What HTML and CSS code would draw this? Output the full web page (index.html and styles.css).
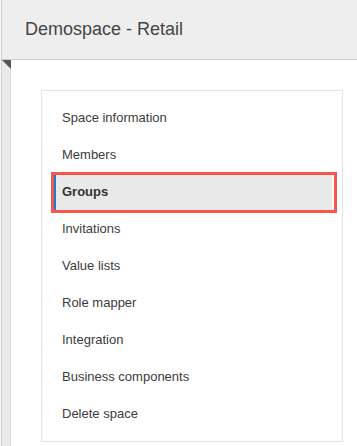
FILE: index.html
```html
<!DOCTYPE html>
<html>
<head>
<meta charset="utf-8">
<link rel="stylesheet" href="styles.css">
</head>
<body>
<div class="frame">
  <header class="top">Demospace - Retail</header>
  <div class="body">
    <div class="rail"></div>
    <main class="main">
      <span class="corner"></span>
      <nav class="card">
        <div class="item">Space information</div>
        <div class="item">Members</div>
        <div class="item selected">Groups</div>
        <div class="item">Invitations</div>
        <div class="item">Value lists</div>
        <div class="item">Role mapper</div>
        <div class="item">Integration</div>
        <div class="item">Business components</div>
        <div class="item">Delete space</div>
      </nav>
    </main>
  </div>
</div>
</body>
</html>
```
FILE: styles.css
```css
html, body {
  margin: 0;
  padding: 0;
  height: 100%;
}
body {
  background: #f6f6f6;
  font-family: "Liberation Sans", Arial, sans-serif;
  overflow: hidden;
}
.frame {
  margin-left: 1px;
  border-left: 1px solid #cfcfcf;
  height: 100%;
  display: flex;
  flex-direction: column;
}
.top {
  height: 59px;
  background: #eeeeee;
  border-bottom: 1px solid #cccccc;
  box-sizing: content-box;
  display: flex;
  align-items: center;
  padding-left: 23px;
  font-size: 18px;
  color: #454545;
  flex-shrink: 0;
}
.body {
  flex: 1;
  display: flex;
}
.rail {
  width: 8px;
  background: #e9e9e9;
  border-right: 1px solid #d9d9d9;
  flex-shrink: 0;
}
.main {
  position: relative;
  flex: 1;
  background: #ffffff;
  padding: 30px 14px 0 30px;
}
.corner {
  position: absolute;
  left: -9px;
  top: 0;
  width: 0;
  height: 0;
  border-top: 9px solid #555555;
  border-left: 9px solid transparent;
}
.card {
  border: 1px solid #e3e3e3;
  padding: 8px 10px 9px 12px;
  background: #fff;
}
.item {
  height: 37px;
  display: flex;
  align-items: center;
  padding-left: 6px;
  border-left: 2px solid transparent;
  font-size: 13px;
  color: #3c3c3c;
  position: relative;
}
.item.selected {
  background: #e9e9e9;
  border-left-color: #1b7fd0;
  font-weight: bold;
  color: #333;
}
.item.selected::after {
  content: "";
  position: absolute;
  left: -5px;
  top: -1px;
  right: -5px;
  bottom: -3px;
  border: 3px solid #f5574a;
  pointer-events: none;
}
```
